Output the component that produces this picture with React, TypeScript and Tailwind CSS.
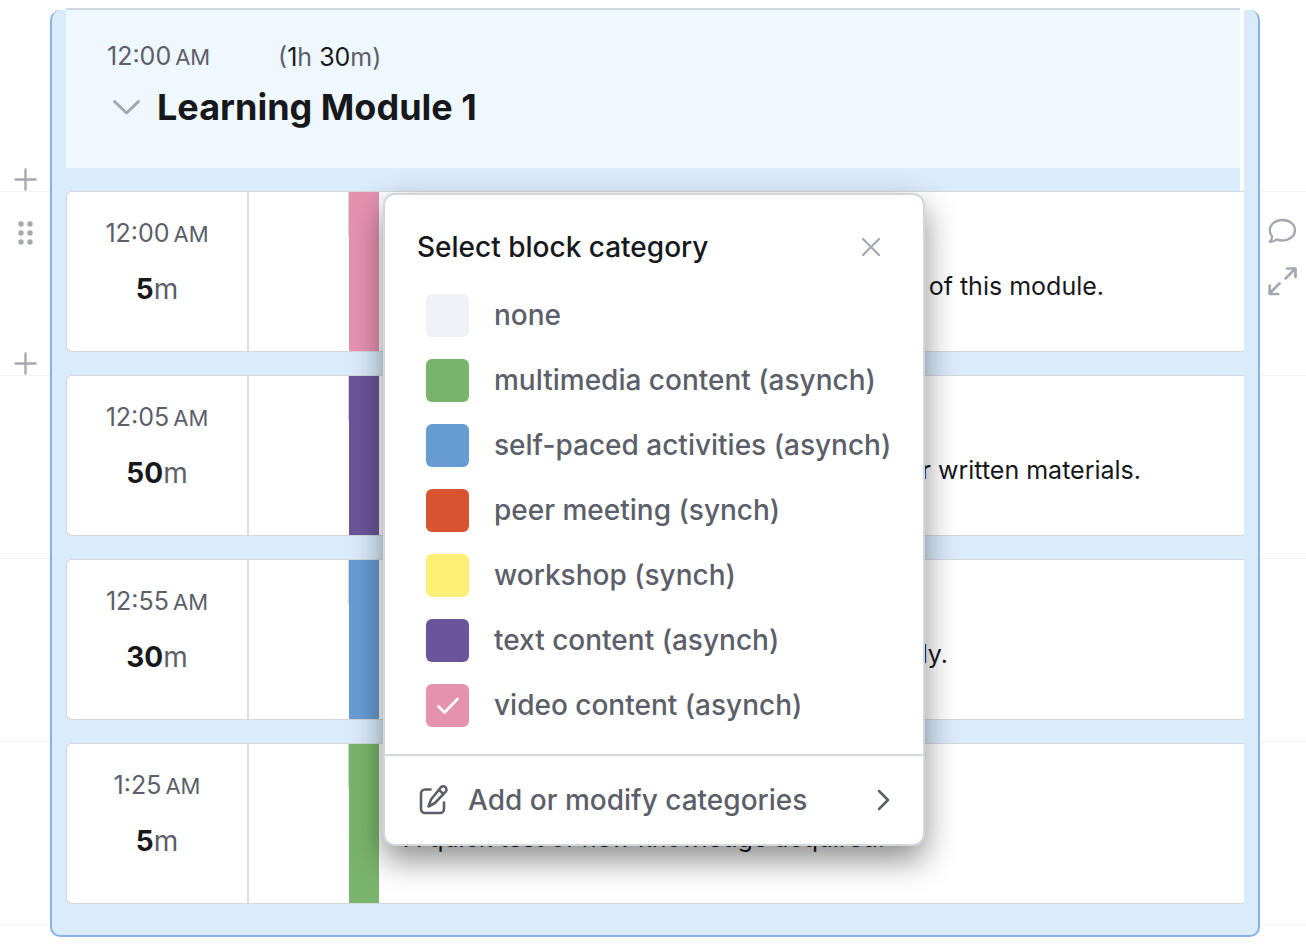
import { useState } from 'react';
import clsx from 'clsx';

type Block = {
  time: string;
  minutes: number;
  color: string;
  text: string;
  textWidth: string;
};

const CATEGORIES = [
  { name: 'none', color: 'bg-[#f0f1f6]' },
  { name: 'multimedia content (asynch)', color: 'bg-[#79b46c]' },
  { name: 'self-paced activities (asynch)', color: 'bg-[#679cd3]' },
  { name: 'peer meeting (synch)', color: 'bg-[#d8542f]' },
  { name: 'workshop (synch)', color: 'bg-[#fdef75]' },
  { name: 'text content (asynch)', color: 'bg-[#6a559b]' },
  { name: 'video content (asynch)', color: 'bg-[#e592af]' },
];

const BLOCKS: Block[] = [
  {
    time: '12:00',
    minutes: 5,
    color: 'bg-[#e592af]',
    text: 'A short video that introduces the content of this module.',
    textWidth: 'w-[704px]',
  },
  {
    time: '12:05',
    minutes: 50,
    color: 'bg-[#6a559b]',
    text: 'Learners read through the articles and other written materials.',
    textWidth: 'w-[741px]',
  },
  {
    time: '12:55',
    minutes: 30,
    color: 'bg-[#679cd3]',
    text: 'Learners practice the new skills individually.',
    textWidth: 'w-[548px]',
  },
  {
    time: '1:25',
    minutes: 5,
    color: 'bg-[#79b46c]',
    text: 'A quick test of new knowledge acquired.',
    textWidth: 'w-[485px]',
  },
];

const Time = ({ value }: { value: string }) => (
  <span className="flex items-baseline gap-1 text-[25px] leading-8 text-[#5c5f6a]">
    {value}
    <span className="text-[22px]">AM</span>
  </span>
);

const PlusButton = () => (
  <button type="button" aria-label="Add block" className="block size-6">
    <svg viewBox="0 0 24 24" fill="none" stroke="#a5a8b0" strokeWidth="2.4" strokeLinecap="round">
      <path d="M12.500 2.500v20M2.500 12.500h20" />
    </svg>
  </button>
);

const LeftRail = () => (
  <div className="w-[50px] shrink-0 flex flex-col items-center">
    <div className="h-[192px] w-full flex flex-col items-center justify-end border-b border-[#f5f5f7]">
      <PlusButton />
    </div>
    <div className="h-[184px] w-full flex flex-col items-center justify-between pt-[29px] border-b border-[#f5f5f7]">
      <button type="button" aria-label="Drag block">
        <svg width="16" height="24" viewBox="0 0 16 24" fill="#a5a8b0">
          <circle cx="4" cy="3" r="2.7" />
          <circle cx="13" cy="3" r="2.7" />
          <circle cx="4" cy="12" r="2.7" />
          <circle cx="13" cy="12" r="2.7" />
          <circle cx="4" cy="21" r="2.7" />
          <circle cx="13" cy="21" r="2.7" />
        </svg>
      </button>
      <PlusButton />
    </div>
    <div className="h-[183px] w-full border-b border-[#f5f5f7]" />
    <div className="h-[183px] w-full border-b border-[#f5f5f7]" />
    <div className="h-[183px] w-full border-b border-[#f5f5f7]" />
  </div>
);

const RightRail = () => (
  <div className="w-[46px] shrink-0">
    <div className="h-[192px] border-b border-[#f5f5f7]" />
    <div className="h-[184px] flex flex-col items-start gap-5 pl-[7px] pt-6 border-b border-[#f5f5f7]">
      <button type="button" aria-label="Comment">
        <svg width="30" height="30" viewBox="0 0 30 30" fill="none" stroke="#a5a8b0" strokeWidth="2.3" strokeLinecap="round" strokeLinejoin="round">
          <path d="M15.500 4C22.500 4 28 8.500 28 14.200S22.500 24.500 15.500 24.500c-2.200 0-4-.4-5.800-1.100-2 1.800-4 2.700-6.900 2.500 1.500-1.500 2.400-3.200 2.300-5.400C3.600 18.700 2.800 16.700 2.800 14.200 2.800 8.500 8.500 4 15.500 4z" />
        </svg>
      </button>
      <button type="button" aria-label="Expand">
        <svg width="30" height="30" viewBox="0 0 30 30" fill="none" stroke="#a5a8b0" strokeWidth="2.700" strokeLinecap="round" strokeLinejoin="round">
          <path d="M18.500 12.500l9-9M20 2.500h8.500v8.500M12.500 17.500l-9.500 9.500M2.700 19.500V28h8.500" />
        </svg>
      </button>
    </div>
    <div className="h-[183px] border-b border-[#f5f5f7]" />
    <div className="h-[183px] border-b border-[#f5f5f7]" />
    <div className="h-[183px] border-b border-[#f5f5f7]" />
  </div>
);

const ModuleHeader = () => (
  <header className="-mt-[2px] mr-[4px] h-[160px] border-t-2 border-[#d3d6dd] bg-[#f0f8ff] pl-[41px] pt-[30px]">
    <div className="flex items-center">
      <div className="w-[171px]">
        <Time value="12:00" />
      </div>
      <span className="text-[25px] leading-8 text-[#5c5f6a]">
        (<span className="text-[#17181c]">1</span>h <span className="text-[#17181c]">30</span>m)
      </span>
    </div>
    <div className="mt-3 flex items-center gap-4">
      <button type="button" aria-label="Collapse module" className="ml-[5px]">
        <svg width="29" height="18" viewBox="0 0 29 18" fill="none" stroke="#a5a8b0" strokeWidth="3" strokeLinecap="round" strokeLinejoin="round">
          <path d="M2.500 3.500l12 11.500L26.500 3.500" />
        </svg>
      </button>
      <h1 className="text-[36px] leading-[44px] font-bold text-[#17181c]">Learning Module 1</h1>
    </div>
  </header>
);

const BlockRow = ({ block }: { block: Block }) => (
  <article className="h-[161px] flex overflow-hidden rounded-l-[6px] border border-r-0 border-[#d3d6da] bg-white">
    <div className="w-[182px] shrink-0 flex flex-col items-center gap-[23px] border-r-2 border-[#d8dbe1] pt-[25px]">
      <Time value={block.time} />
      <span className="text-[28px] leading-8 text-[#5c5f6a]">
        <b className="text-[#17181c]">{block.minutes}</b>m
      </span>
    </div>
    <div className="w-[99px] shrink-0" />
    <div className="h-11 w-px shrink-0 bg-[#d3d6dd]" />
    <div className={clsx('w-[30px] shrink-0', block.color)} />
    <div className="flex-1 min-w-0 pl-[21px] pt-[78px]">
      <p className={clsx('text-right whitespace-nowrap text-[25px] leading-8 text-[#17181c]', block.textWidth)}>
        {block.text}
      </p>
    </div>
  </article>
);

const CategoryPicker = () => {
  const [selected, setSelected] = useState('video content (asynch)');
  return (
    <div
      role="dialog"
      aria-labelledby="picker-title"
      className="absolute left-[318px] top-[2px] w-[542px] -ml-px rounded-xl border-2 border-[#d3d7dc] bg-white shadow-[0_14px_32px_rgba(0,0,0,0.45)]"
    >
      <div className="flex items-center justify-between pt-[34px] pl-8 pr-[42px]">
        <h2 id="picker-title" className="text-[28px] leading-9 font-medium text-[#17181c]">
          Select block category
        </h2>
        <button type="button" aria-label="Close">
          <svg width="20" height="20" viewBox="0 0 20 20" fill="none" stroke="#a5a8b0" strokeWidth="2.200" strokeLinecap="round">
            <path d="M2 2l16 16M18 2L2 18" />
          </svg>
        </button>
      </div>
      <div role="radiogroup" aria-labelledby="picker-title" className="flex flex-col gap-[22px] pt-[29px] pb-[27px] pl-[41px]">
        {CATEGORIES.map(({ name, color }) => (
          <label key={name} className="flex items-center gap-[25px] whitespace-nowrap text-[28px] leading-[43px] font-medium text-[#5c5f6a]">
            <span className="grid size-[43px] shrink-0 place-items-center">
              <input
                type="radio"
                name="category"
                value={name}
                checked={selected === name}
                onChange={() => setSelected(name)}
                className={clsx('col-start-1 row-start-1 size-[43px] appearance-none rounded-md', color)}
              />
              {selected === name && (
                <svg className="pointer-events-none col-start-1 row-start-1" width="24" height="20" viewBox="0 0 24 20" fill="none" stroke="white" strokeWidth="2.800" strokeLinecap="round" strokeLinejoin="round">
                  <path d="M2.500 10.500l6 6L21.500 3" />
                </svg>
              )}
            </span>
            {name}
          </label>
        ))}
      </div>
      <button
        type="button"
        className="flex h-[90px] w-full items-center border-t-2 border-[#d3d7dc] pl-[34px] pr-[33px] text-[28px] font-medium text-[#5c5f6a]"
      >
        <svg width="30" height="32" viewBox="0 0 30 32" fill="none" stroke="currentColor" strokeWidth="2.600" strokeLinecap="round" strokeLinejoin="round">
          <path d="M11.500 5.500H6A4 4 0 0 0 2 9.500V25A4 4 0 0 0 6 29h15a4 4 0 0 0 4-4v-6.500" />
          <path d="M21.700 3.500a3.200 3.200 0 0 1 5 4.200L16 19l-6.500 3.500L12 15.500z" />
          <path d="M20 6l4.300 3.900" />
        </svg>
        <span className="ml-[19px] flex-1 text-left">Add or modify categories</span>
        <svg width="14" height="24" viewBox="0 0 14 24" fill="none" stroke="currentColor" strokeWidth="2.500" strokeLinecap="round" strokeLinejoin="round">
          <path d="M3 3l9 9-9 9" />
        </svg>
      </button>
    </div>
  );
};

const App = () => (
  <div className="flex bg-white font-['Inter',sans-serif]">
    <LeftRail />
    <main className="mt-[10px] flex flex-1 min-w-0 flex-col rounded-[10px] border-x-2 border-b-2 border-[#84aff0] bg-[#daebfc] pl-[14px] pr-[14px] pb-[31px]">
      <div className="border-r-4 border-white bg-[#daebfc]">
        <div className="-mr-[4px] flex flex-col">
          <ModuleHeader />
          <div className="h-[23px]" />
        </div>
      </div>
      <section className="relative flex flex-col gap-[23px]">
        {BLOCKS.map((block) => (
          <BlockRow key={block.time} block={block} />
        ))}
        <CategoryPicker />
      </section>
    </main>
    <RightRail />
  </div>
);

export default App;
